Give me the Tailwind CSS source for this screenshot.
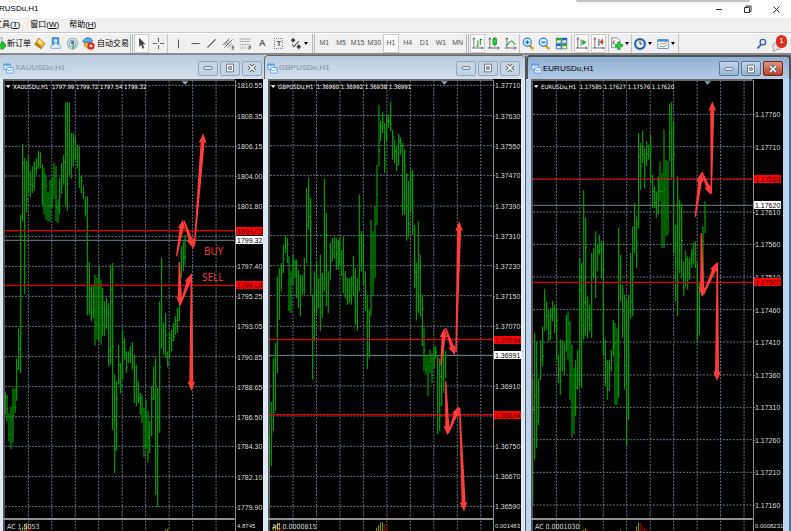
<!DOCTYPE html>
<html lang="zh-CN">

<head>
  <meta charset="UTF-8" />
  <meta name="viewport" content="width=device-width, initial-scale=1.0" />
  <title>EURUSDu,H1</title>
  <script src="https://cdn.jsdelivr.net/npm/@tailwindcss/browser@4"></script>
</head>

<body class="h-screen overflow-hidden flex flex-col bg-[#f0f0f0] text-black font-['Liberation_Sans','Noto_Sans_CJK_SC',sans-serif]">
  <!-- Title bar -->
  <header class="relative flex h-[18px] shrink-0 items-center justify-between bg-white">
    <h1 class="text-[8px] leading-[18px] -ml-px">RUSDu,H1</h1>
    <div class="absolute right-[41px] top-0 h-[2px] w-[174px] rounded-b bg-[#c4c4c4] shadow"></div>
    <div class="flex">
      <button aria-label="Minimize" class="flex w-[28px] items-center justify-center">
        <svg class="size-[9px]" viewBox="0 0 9 9"><path d="M1 4.5h6" stroke="#333" /></svg>
      </button>
      <button aria-label="Restore" class="flex w-[28px] items-center justify-center">
        <svg class="size-[9px]" viewBox="0 0 9 9" fill="none" stroke="#333"><path d="M1.500 2.500h5v5h-5zM3 2.500V1h5v5.500H6.500" /></svg>
      </button>
      <button aria-label="Close" class="flex w-[30px] items-center justify-center">
        <svg class="size-[9px]" viewBox="0 0 9 9"><path d="M1.500 1.500l6 6M7.500 1.500l-6 6" stroke="#333" /></svg>
      </button>
    </div>
  </header>

  <!-- Menu -->
  <nav class="flex h-[15px] shrink-0 gap-[10px] border-b border-[#c9c9c9] text-[8px] leading-[14px]">
    <button class="-ml-[6px]">工具(<u>T</u>)</button>
    <button>窗口(<u>W</u>)</button>
    <button>帮助(<u>H</u>)</button>
  </nav>

  <!-- Toolbar -->
  <div class="flex h-[22px] shrink-0 items-center border-b-2 border-[#8a8a8a] border-t border-t-white text-[8px] text-[#555]">
    <button class="flex w-[31px] items-center gap-px text-black">
      <svg class="h-[13px] w-[6px]" viewBox="5 0 6 13"><path d="M3 1h4v11H3z" fill="#eee" stroke="#999" /><path d="M4 7h2V5h3v2h2v3H9v2H6v-2H4z" fill="#19c22b" stroke="#0a8a18" stroke-width=".5" /></svg>
      <span class="whitespace-nowrap">新订单</span>
    </button>
    <div class="grid w-[66px] shrink-0 grid-cols-4 justify-items-center">
      <button aria-label="MetaEditor"><svg class="size-[13px]" viewBox="0 0 16 16"><path d="M2 9L7 1.500 14.500 8 10 14.500z" fill="#f2c23c" stroke="#a97010" /><path d="M2 9l8 5.500v-3L4 6.500z" fill="#b9780f" /><path d="M6 5l2-2 4 4-2 2z" fill="#ffe79a" /></svg></button>
      <button aria-label="Market"><svg class="size-[13px]" viewBox="0 0 16 16"><path d="M4 1h8v8H4z" fill="#4ba0ea" stroke="#1f6cb8" /><path d="M6 3h4v4H6z" fill="#c4e3ff" /><path d="M2 14c-1-3 1-5 3-4 1-3 6-3 6 0 3-1 5 2 3 4z" fill="#e3eefa" stroke="#7a9cc6" /></svg></button>
      <button aria-label="Signals"><svg class="size-[13px]" viewBox="0 0 16 16" fill="none"><circle cx="8" cy="8" r="6.500" stroke="#a6bccb" stroke-width="1.500" /><circle cx="8" cy="8" r="4" stroke="#8fabba" stroke-width="1.500" /><circle cx="8" cy="7" r="2" fill="#3a7492" /><path d="M8 8l2 1v6H8z" fill="#3eb34c" /></svg></button>
      <button aria-label="Experts"><svg class="size-[13px]" viewBox="0 0 16 16"><path d="M3 7l9 0-1 5-4 2-4-3z" fill="#f0c13b" stroke="#b07f16" /><path d="M1 6c0-2 3-5 6-5s6 2 6 4c-3 2-9 2-12 1z" fill="#5ba9e6" stroke="#2870b0" /><circle cx="11" cy="11" r="4.500" fill="#e02a1c" /><path d="M9.500 9.500h3v3h-3z" fill="#fff" /></svg></button>
    </div>
    <button class="w-[33px] shrink-0 whitespace-nowrap text-left text-black">自动交易</button>
    <span class="h-[19px] w-[3px] shrink-0 border-x border-[#b8b8b8]"></span>
    <div class="grid h-full w-[34px] shrink-0 grid-cols-2 place-items-center">
      <button aria-label="Cursor" class="flex h-full w-[15px] items-center justify-center border border-[#ccc] bg-[#fafafa]"><svg class="size-[13px]" viewBox="0 0 16 16"><path d="M5 1v11l2.500-2.500 2 5 2-1-2-4.500H13z" fill="#444" /></svg></button>
      <button aria-label="Crosshair"><svg class="size-[13px]" viewBox="0 0 16 16"><path d="M8 1v5M8 10v5M1 8h5M10 8h5" stroke="#666" stroke-width="1.300" /></svg></button>
    </div>
    <span class="h-[19px] w-px shrink-0 bg-[#c4c4c4]"></span>
    <div class="grid w-[134px] shrink-0 grid-cols-8 items-center justify-items-center ml-[2px]">
      <button aria-label="Vertical line"><svg class="size-[13px]" viewBox="0 0 16 16"><path d="M8 3v11" stroke="#555" stroke-width="1.300" /></svg></button>
      <button aria-label="Horizontal line"><svg class="size-[13px]" viewBox="0 0 16 16"><path d="M3 8h10" stroke="#555" stroke-width="1.300" /></svg></button>
      <button aria-label="Trendline"><svg class="size-[13px]" viewBox="0 0 16 16"><path d="M3 13L13 3" stroke="#555" stroke-width="1.300" /></svg></button>
      <button aria-label="Channel"><svg class="size-[13px]" viewBox="0 0 16 16" fill="none" stroke="#555"><path d="M1 10l8-8M3 13L13 3M7 13l5-5M3 8l3 3M5 6l3 3M7 4l3 3" /><path d="M15 11h-2.500v4H15M12.500 13H15" /></svg></button>
      <button aria-label="Fibonacci"><svg class="size-[13px]" viewBox="0 0 16 16" fill="none" stroke="#777"><path d="M1 2.500h13M1 5.500h13M1 9.500h13M1 13.500h8" stroke-dasharray="2 1" /><path d="M12.500 15.500v-4H15M12.500 13.500H15" stroke="#444" /></svg></button>
      <button class="text-[9px] leading-[13px] font-bold">A</button>
      <button class="h-[11px] w-[9px] border border-dotted border-[#888] text-[8px] leading-[9px] font-bold">T</button>
      <button aria-label="Arrows"><svg class="size-[13px]" viewBox="0 0 16 16" fill="#444"><path d="M5 1l3 3-3 3-3-3zM12 9l3 3-3 3-3-3z" /><path d="M4 9l2 3 6-7" fill="none" stroke="#444" stroke-width="1.300" /></svg></button>
    </div>
    <span class="mr-[3px] shrink-0 border-x-2 border-t-3 border-x-transparent border-t-black"></span>
    <span class="mx-px h-[19px] w-[3px] shrink-0 border-x border-[#b8b8b8]"></span>
    <div class="grid h-full w-[150px] shrink-0 grid-cols-9 text-[7px]">
      <button>M1</button><button>M5</button><button>M15</button><button>M30</button>
      <button class="border border-[#ccc] bg-[#fafafa]">H1</button>
      <button>H4</button><button>D1</button><button>W1</button><button>MN</button>
    </div>
    <span class="h-[19px] w-[3px] shrink-0 border-x border-[#b8b8b8]"></span>
    <div class="grid h-full w-[50px] shrink-0 grid-cols-3 place-items-center">
      <button aria-label="Bar chart" class="flex h-full w-[15px] items-center justify-center border border-[#ccc] bg-[#fafafa]"><svg class="size-[13px]" viewBox="0 0 16 16" fill="none"><path d="M3.500 1v13M1 13.500h14M2 3l1.500-2L5 3M13 12l2 1.500-2 1.500" stroke="#555" /><path d="M8.500 4v8M6.500 11h2M11.500 2v8M11.500 3h2" stroke="#19a02a" stroke-width="1.300" /></svg></button>
      <button aria-label="Candlesticks"><svg class="size-[13px]" viewBox="0 0 16 16" fill="none"><path d="M3.500 1v13M1 13.500h14M2 3l1.500-2L5 3M13 12l2 1.500-2 1.500" stroke="#555" /><path d="M9.500 0v12" stroke="#0d7a1a" /><path d="M7.500 2h4v7h-4z" fill="#2ddb3e" stroke="#0d7a1a" /></svg></button>
      <button aria-label="Line chart"><svg class="size-[13px]" viewBox="0 0 16 16" fill="none"><path d="M3.500 1v13M1 13.500h14M2 3l1.500-2L5 3M13 12l2 1.500-2 1.500" stroke="#555" /><path d="M3 11c2-2 4-6 6-6s3 3 5 4" stroke="#19a02a" stroke-width="1.300" /></svg></button>
    </div>
    <span class="h-[19px] w-px shrink-0 bg-[#c4c4c4]"></span>
    <div class="grid w-[50px] shrink-0 grid-cols-3 justify-items-center">
      <button aria-label="Zoom in"><svg class="size-[13px]" viewBox="0 0 16 16"><path d="M9 10l5 5" stroke="#d6a11d" stroke-width="3" /><circle cx="6.500" cy="6.500" r="5" fill="#d6ecff" stroke="#3d85cd" stroke-width="1.500" /><path d="M4 6.500h5M6.500 4v5" stroke="#1f68b5" stroke-width="1.500" /></svg></button>
      <button aria-label="Zoom out"><svg class="size-[13px]" viewBox="0 0 16 16"><path d="M9 10l5 5" stroke="#d6a11d" stroke-width="3" /><circle cx="6.500" cy="6.500" r="5" fill="#d6ecff" stroke="#3d85cd" stroke-width="1.500" /><path d="M4 6.500h5" stroke="#1f68b5" stroke-width="1.500" /></svg></button>
      <button aria-label="Tile windows"><svg class="size-[13px]" viewBox="0 0 16 16"><path d="M1 1h7v7H1zM8 8h7v7H8z" fill="#3f9e2d" /><path d="M8 1h7v7H8zM1 8h7v7H1z" fill="#2a5fbc" /><path d="M2 4h5v3H2zM9 4h5v3H9zM2 11h5v3H2zM9 11h5v3H9z" fill="#e4efe8" /></svg></button>
    </div>
    <span class="ml-px h-[19px] w-px shrink-0 bg-[#c4c4c4]"></span>
    <div class="grid h-full w-[34px] shrink-0 grid-cols-2 place-items-center ml-px">
      <button aria-label="Auto scroll" class="flex h-full w-[15px] items-center justify-center border border-[#ccc] bg-[#fafafa]"><svg class="size-[13px]" viewBox="0 0 16 16" fill="none"><path d="M3.500 1v13M1 13.500h14M2 3l1.500-2L5 3M13 12l2 1.500-2 1.500M7.500 3v8" stroke="#555" /><path d="M9 3l5 3.500L9 10z" fill="#19a02a" /></svg></button>
      <button aria-label="Chart shift" class="flex h-full w-[15px] items-center justify-center border border-[#ccc] bg-[#fafafa]"><svg class="size-[13px]" viewBox="0 0 16 16" fill="none"><path d="M3.500 1v13M1 13.500h14M2 3l1.500-2L5 3M13 12l2 1.500-2 1.500" stroke="#555" /><path d="M8.500 2v9" stroke="#3b6ea8" stroke-width="1.500" /><path d="M15 6h-3M13 3L9.500 6 13 9z" fill="#d8491f" stroke="#d8491f" /></svg></button>
    </div>
    <span class="mx-px h-[19px] w-px shrink-0 bg-[#c4c4c4]"></span>
    <button aria-label="Indicators" class="flex w-[19px] shrink-0 items-center justify-between">
      <svg class="size-[13px]" viewBox="0 0 16 16"><path d="M2 1h7l3 3v9H2z" fill="#f3f3f3" stroke="#888" /><path d="M4 10V6c0-2 2-2 2-1M3 7h3" fill="none" stroke="#666" /><path d="M6.500 9h3V6h3v3h3v3h-3v3.500h-3V12h-3z" fill="#1fd333" stroke="#0c8c1c" stroke-width=".7" /></svg>
      <span class="border-x-2 border-t-3 border-x-transparent border-t-black"></span>
    </button>
    <span class="mx-[2px] h-[19px] w-px shrink-0 bg-[#c4c4c4]"></span>
    <button aria-label="Periods" class="flex w-[18px] shrink-0 items-center justify-between">
      <svg class="size-[12px]" viewBox="0 0 16 16"><circle cx="8" cy="8" r="6.500" fill="#eef6ff" stroke="#1f66b4" stroke-width="3" /><path d="M8 4v4h3" fill="none" stroke="#333" stroke-width="1.300" /></svg>
      <span class="border-x-2 border-t-3 border-x-transparent border-t-black"></span>
    </button>
    <button aria-label="Templates" class="ml-[5px] flex w-[18px] shrink-0 items-center justify-between">
      <svg class="size-[12px]" viewBox="0 0 16 16"><path d="M1 2h14v12H1z" fill="#fff" stroke="#4d7fb9" /><path d="M1 2h14v3H1z" fill="#4d90d8" /><path d="M3 9l3-2 3 1 4-2" fill="none" stroke="#c8502a" /><path d="M3 12l3-1 3 1 4-3" fill="none" stroke="#2c9140" /></svg>
      <span class="border-x-2 border-t-3 border-x-transparent border-t-black"></span>
    </button>
    <span class="ml-[3px] h-[19px] w-px shrink-0 bg-[#c4c4c4]"></span>
    <button aria-label="Search" class="ml-auto mr-[5px]"><svg class="size-[11px]" viewBox="0 0 16 16" fill="none"><path d="M8 9l-6 6" stroke="#3c5fb4" stroke-width="2.500" /><circle cx="10" cy="6" r="4" stroke="#3c5fb4" stroke-width="2" /></svg></button>
    <button aria-label="Notifications" class="relative mr-[4px] h-[16px] w-[15px]">
      <svg class="absolute bottom-0 left-0 size-[10px]" viewBox="0 0 12 12"><path d="M1 5c0-6 10-6 10 0 0 3-3 5-6 4l-3 3V8C1 7 1 6 1 5z" fill="#e4e4e4" stroke="#999" /></svg>
      <span class="absolute -top-px right-0 flex h-[13px] w-[11px] items-center justify-center rounded-full bg-[#dc2f1c] text-[8px] text-white">1</span>
    </button>
  </div>

  <!-- Chart windows -->
  <main class="grid min-h-0 flex-1 grid-cols-[264fr_262fr_265fr] bg-[#808080]">
    <section class="flex min-w-0 flex-col bg-[#dce8f4] pr-px pl-[3px]">
      <div class="-mr-px -ml-[3px] flex h-[24px] shrink-0 items-center bg-linear-to-b from-[#b9cadc] to-[#d3e0ed] pt-[2px] pr-[2px] pl-[3px]">
        <svg class="size-[11px]" viewBox="0 0 12 12"><path d="M1 1h7v6H1z" fill="#e7f2fe" stroke="#5fa0e6" /><path d="M1 1h7v2H1z" fill="#5fa0e6" /><path d="M4 5h7v6H4z" fill="#f6faff" stroke="#5fa0e6" /><path d="M5 7l2 2 2-2 1 1" fill="none" stroke="#5fa0e6" /></svg>
        <h2 class="ml-px flex-1 text-[8px] text-[#87919b]">XAUUSDu,H1</h2>
        <div class="flex gap-[2px]" data-buttons></div>
      </div>
      <div class="flex min-h-0 flex-1 bg-black" data-chart="xau"></div>
    </section>
    <section class="flex min-w-0 flex-col border-r border-[#555] bg-[#dce8f4] pr-[4px] pl-[4px]">
      <div class="-mr-[4px] -ml-[4px] flex h-[24px] shrink-0 items-center rounded-t border-t border-l border-[#666] bg-linear-to-b from-[#b9cadc] to-[#d3e0ed] pt-px pr-[5px] pl-[2px]">
        <svg class="size-[11px]" viewBox="0 0 12 12"><path d="M1 1h7v6H1z" fill="#e7f2fe" stroke="#5fa0e6" /><path d="M1 1h7v2H1z" fill="#5fa0e6" /><path d="M4 5h7v6H4z" fill="#f6faff" stroke="#5fa0e6" /><path d="M5 7l2 2 2-2 1 1" fill="none" stroke="#5fa0e6" /></svg>
        <h2 class="ml-px flex-1 text-[8px] text-[#87919b]">GBPUSDu,H1</h2>
        <div class="flex gap-[2px]" data-buttons></div>
      </div>
      <div class="flex min-h-0 flex-1 bg-black" data-chart="gbp"></div>
    </section>
    <section class="flex min-w-0 flex-col border-r-2 border-[#3d7f96] bg-[#bdd4ee] pr-[6px] pl-[5px]">
      <div class="-mr-[8px] -ml-[5px] flex h-[24px] shrink-0 items-center rounded-t border-2 border-b-0 border-[#4a525a] bg-linear-to-b from-[#93afd0] to-[#b3cbe6] pt-px pr-[6px] pl-[3px]">
        <svg class="size-[11px]" viewBox="0 0 12 12"><path d="M1 1h7v6H1z" fill="#e7f2fe" stroke="#5fa0e6" /><path d="M1 1h7v2H1z" fill="#5fa0e6" /><path d="M4 5h7v6H4z" fill="#f6faff" stroke="#5fa0e6" /><path d="M5 7l2 2 2-2 1 1" fill="none" stroke="#5fa0e6" /></svg>
        <h2 class="ml-px flex-1 text-[8px] text-black">EURUSDu,H1</h2>
        <div class="flex gap-[2px]" data-buttons="active"></div>
      </div>
      <div class="flex min-h-0 flex-1 bg-black" data-chart="eur"></div>
    </section>
  </main>

  <script>
    // All chart coordinates are stored in thirds of a pixel: bars are "x high low"
    const charts = {
      xau: {
        left: 9, axisWidth: 28, right: 704, gridX: 85, marker: 555,
        title: 'XAUUSDu,H1  1797.99 1799.72 1797.54 1799.32',
        labels: [[22, '1810.55'], [114, '1808.35'], [205, '1806.15'], [294, '1804.00'], [384, '1801.80'], [475, ''], [565, '1797.40'], [655, '1795.25'], [745, '1793.05'], [836, '1790.85'], [926, '1788.65'], [1016, '1786.50'], [1105, '1784.30'], [1196, '1782.10'], [1286, '1779.90']],
        levels: [[458, '1800.03'], [622, '1796.04']],
        price: [487, '1799.32'],
        ac: ['AC 1.5053', '4.8745'],
        hist: [[62, 6, 'y'], [68, 13, 'y'], [74, 20, 'y'], [80, 24, 'y'], [86, 20, 'r'], [92, 12, 'r'], [497, 4, 'y'], [503, 6, 'y']],
        arrows: [[530, 535, 549, 425], [552, 428, 581, 512], [583, 505, 610, 166], [538, 552, 540, 684], [541, 680, 574, 587], [574, 587, 574, 939]],
        notes: [[612, 531, 'BUY'], [607, 609, 'SELL']],
        bars: '15 941 1011,21 951 1031,27 1006 1091,33 986 1113,39 931 1094,45 931 1006,50 841 968,56 751 876,62 410 885,68 198 430,74 240 648,80 250 403,85 235 345,91 280 358,97 265 345,103 250 338,109 240 290,115 218 272,121 222 270,127 258 382,132 270 410,138 290 425,144 342 430,150 305 432,156 298 390,162 255 362,168 265 430,174 365 435,179 300 408,185 255 348,191 230 320,197 73 385,202 73 400,208 73 290,214 165 302,220 165 265,226 175 245,232 200 270,238 205 330,244 295 345,250 325 362,256 355 415,262 355 712,268 552 710,274 620 730,280 625 720,285 590 802,291 600 785,297 568 790,303 605 800,308 630 775,314 670 775,320 660 752,326 675 866,332 560 860,338 555 1056,344 890 1185,350 910 1118,356 800 920,362 855 945,368 755 905,374 780 845,379 820 885,385 820 855,391 805 855,397 793 875,403 830 975,409 860 985,415 910 975,421 945 1010,426 950 1035,432 990 1138,438 965 1110,444 1000 1153,449 1030 1125,455 925 1075,461 865 965,467 840 1250,473 930 1286,479 670 1065,485 540 812,491 735 830,497 705 840,503 820 868,509 762 840,515 755 820,521 735 790,526 715 770,532 690 765,538 640 730,544 505 600,550 490 580,555 470 560'
      },
      gbp: {
        left: 12, axisWidth: 28, right: 687, gridX: 87, marker: 541,
        title: 'GBPUSDu,H1  1.36960 1.36992 1.36938 1.36991',
        labels: [[22, '1.37710'], [113, '1.37630'], [203, '1.37550'], [292, '1.37470'], [384, '1.37390'], [473, '1.37310'], [563, '1.37230'], [653, '1.37150'], [745, '1.37070'], [833, ''], [924, '1.36910'], [1014, ''], [1105, '1.36750'], [1195, '1.36670'], [1285, '1.36590']],
        levels: [[785, '1.37034'], [1010, '1.36834']],
        price: [832, '1.36991'],
        ac: ['AC 0.0000815', '0.001483'],
        hist: [[28, 10, 'y'], [34, 18, 'y'], [40, 25, 'y'], [46, 24, 'y'], [52, 14, 'r'], [58, 6, 'r'], [338, 10, 'y'], [344, 18, 'y'], [350, 26, 'y'], [356, 26, 'y'], [362, 20, 'r'], [368, 8, 'r']],
        arrows: [[531, 862, 541, 750], [545, 750, 573, 832], [576, 822, 586, 430], [545, 910, 551, 1072], [553, 1065, 585, 984], [587, 990, 600, 1301]],
        notes: [],
        bars: '16 1071 1281,22 971 1164,28 841 1058,34 796 999,40 595 885,46 570 725,52 555 640,58 500 585,64 473 525,70 480 555,75 535 700,81 580 705,87 530 620,93 545 600,97 545 660,103 575 690,109 590 715,115 590 650,121 540 650,128 330 555,134 300 455,140 360 650,146 650 905,151 580 790,158 555 710,163 600 690,169 530 760,175 585 720,181 303 640,187 405 685,193 580 705,199 495 605,205 480 550,211 477 540,217 480 575,223 485 575,227 478 560,233 515 595,238 475 645,244 580 660,250 600 680,256 600 675,262 595 680,268 535 655,274 570 740,280 600 760,286 350 640,292 460 580,298 465 620,304 580 700,310 650 872,316 695 840,321 425 715,327 460 655,333 385 600,339 260 440,345 80 265,350 130 190,356 103 165,362 135 285,368 108 190,374 110 150,380 72 160,386 155 245,392 185 255,398 205 280,404 168 262,410 178 230,416 195 412,422 215 410,428 285 488,434 310 478,440 275 405,446 275 470,452 440 630,457 555 727,463 430 705,469 530 715,475 655 805,480 750 880,486 830 890,492 835 955,498 815 885,504 825 915,510 805 870,515 805 840,521 835 1068,527 840 1060,533 815 985,539 780 945,545 820 900'
      },
      eur: {
        left: 15, axisWidth: 30, right: 680, gridX: 91, marker: 545,
        title: 'EURUSDu,H1  1.17585 1.17627 1.17576 1.17620',
        labels: [[109, '1.17760'], [206, '1.17710'], [304, ''], [402, '1.17610'], [499, '1.17560'], [597, '1.17510'], [695, '1.17460'], [792, '1.17410'], [891, '1.17360'], [988, '1.17310'], [1085, '1.17260'], [1183, '1.17210'], [1281, '1.17160']],
        levels: [[303, '1.17660'], [613, '1.17502']],
        price: [382, '1.17620'],
        ac: ['AC 0.0001030', '0.0008231'],
        hist: [[173, 4, 'y'], [179, 8, 'y'], [185, 4, 'r'], [284, 4, 'y'], [332, 14, 'y'], [338, 25, 'y'], [344, 24, 'r'], [350, 16, 'r'], [356, 8, 'r'], [362, 4, 'r']],
        arrows: [[508, 416, 526, 283], [528, 283, 556, 352], [556, 345, 559, 70], [526, 465, 529, 656], [532, 650, 574, 552], [574, 555, 573, 909]],
        notes: [],
        bars: '20 901 1276,26 764 1144,32 791 1111,38 901 1041,44 786 906,50 746 864,56 632 760,62 670 755,68 695 790,74 690 785,80 668 730,86 680 765,92 690 845,97 830 915,103 785 950,109 785 880,115 795 890,121 710 820,126 700 845,132 730 965,138 800 1080,144 870 1068,149 845 1015,155 815 935,161 540 925,167 555 930,173 337 785,179 420 775,185 655 780,191 680 760,197 525 780,203 510 600,209 460 660,215 500 580,220 470 530,226 490 600,232 490 830,238 785 925,244 845 965,250 845 940,256 815 880,262 725 835,267 735 980,273 750 980,278 450 960,284 530 670,290 620 780,296 650 935,302 665 1104,308 650 1025,314 525 720,320 445 715,326 375 525,332 415 570,338 165 450,344 195 335,350 158 255,356 210 330,362 190 265,368 200 245,374 173 315,380 290 390,386 325 390,391 340 420,397 295 410,402 250 370,408 285 510,414 155 510,420 245 475,426 250 470,431 78 250,437 72 300,443 130 525,449 440 670,455 295 715,461 365 585,467 375 600,473 550 655,479 518 625,485 535 635,491 540 605,497 515 570,502 495 560,508 490 570,514 555 790,520 615 770,526 600 655,531 445 630,537 370 465'
      }
    };

    // Tapered arrow from (x1, y1) to its tip at (x2, y2)
    function arrow([x1, y1, x2, y2]) {
      const len = Math.hypot(x2 - x1, y2 - y1);
      const ux = (x2 - x1) / len, uy = (y2 - y1) / len;
      const at = (d, w) => `${x2 - ux * d - uy * w},${y2 - uy * d + ux * w}`;
      return `<polygon points="${[at(len, 2), at(26, 6), at(30, 12), at(0, 0), at(30, -12), at(26, -6), at(len, -2)].join(' ')}" fill="#ff3b3b" />`;
    }

    function plot(c) {
      let out = `<g transform="translate(${-c.left / 3} -1) scale(.33333)">`;
      for (let i = 0; i < 9; i++) {
        const x = c.gridX + i * 70.4;
        out += `<path d="M${x} 8V1400" stroke="#65758a" stroke-width="3" stroke-dasharray="6 4" />`;
      }
      for (const [y] of c.labels) {
        out += `<path d="M${c.left + 6} ${y}H${c.right}" stroke="#65758a" stroke-width="3" stroke-dasharray="6 4" />`;
      }
      out += `<path d="M${c.left} ${c.price[0]}H${c.right}" stroke="#6f7e90" stroke-width="3" />`;
      c.bars.split(',').forEach((bar, i) => {
        const [x, hi, lo] = bar.split(' ').map(Number);
        const tick = hi + (lo - hi) * (i % 3 + 1) / 4;
        out += `<path d="M${x} ${hi}V${lo}M${x} ${tick}h4" stroke="${i ? '#00a000' : '#32cd32'}" stroke-width="3.500" />`;
      });
      for (const [y] of c.levels) {
        out += `<path d="M${c.left} ${y}H${c.right}" stroke="#e00000" stroke-width="3.500" />`;
      }
      out += c.arrows.map(arrow).join('');
      out += `<path d="M${c.marker - 10} 10h20l-10 10z" fill="#8fa3b8" />`;
      for (const [x, h, col] of c.hist) {
        out += `<path d="M${x} 1359v${-h}" stroke="${col === 'y' ? '#9a9a00' : '#a00000'}" stroke-width="3" />`;
      }
      // frame and pane splitter
      out += `<path d="M${c.left} 6H${c.right}" stroke="#8a8a8a" stroke-width="4" />`;
      out += `<path d="M${c.left + 3} 5V1400" stroke="#666" stroke-width="5" />`;
      out += `<path d="M${c.left} 1323H${c.right}" stroke="#909090" stroke-width="6" />`;
      out += `<path d="M${c.left + 9} 22h13l-6.500 8z" fill="#fff" /></g>`;
      out += `<text x="10" y="10" fill="#fff" xml:space="preserve" class="text-[6px]">${c.title}</text>`;
      out += `<text x="4" y="450" fill="#ddd">${c.ac[0]}</text>`;
      for (const [x, y, text] of c.notes) {
        out += `<text x="${Math.round((x - c.left) / 3)}" y="${Math.round(y / 3 - 1)}" fill="#ff3b3b" class="text-[10px] font-['Open_Sans',sans-serif]">${text}</text>`;
      }
      return `<svg class="h-full min-w-0 flex-1 text-[7px] font-['DejaVu_Sans_Condensed',sans-serif]">${out}</svg>`;
    }

    function axis(c) {
      let out = '<path d="M.5 1V500" stroke="#8a8a8a" />';
      for (const [y, text] of c.labels) {
        const py = Math.round(y / 3 - 1);
        if (text) out += `<path d="M0 ${py + .5}h2" stroke="#8a8a8a" /><text x="2" y="${py + 3}" fill="#ddd">${text}</text>`;
      }
      for (const [y, text] of c.levels) {
        const py = Math.round(y / 3 - 1);
        out += `<rect x="1" y="${py - 4}" width="27" height="8" fill="#f00" /><text x="2" y="${py + 3}" fill="#400">${text}</text>`;
      }
      const py = Math.round(c.price[0] / 3 - 1);
      out += `<rect x="1" y="${py - 4}" width="27" height="8" fill="#fff" /><text x="2" y="${py + 3}" fill="#000">${c.price[1]}</text>`;
      out += `<text x="2" y="449" fill="#ddd" class="text-[6px]">${c.ac[1]}</text>`;
      return `<svg class="h-full shrink-0 text-[7px]" width="${c.axisWidth}">${out}</svg>`;
    }

    document.querySelectorAll('[data-chart]').forEach(el => {
      const c = charts[el.dataset.chart];
      el.innerHTML = plot(c) + axis(c);
    });

    const glyphs = [
      ['Minimize', '<rect x="2.500" y="5.500" width="9" height="3" rx="1" fill="#fff" stroke="#596273" />'],
      ['Maximize', '<path d="M3 2.500h8v9H3z" fill="#fff" stroke="#596273" /><path d="M5.500 5.500h3v3h-3z" fill="#cdd9e6" stroke="#596273" />'],
      ['Close', '<path d="M3.500 3.500l7 7M10.500 3.500l-7 7" stroke="#596273" stroke-width="4" /><path d="M3.500 3.500l7 7M10.500 3.500l-7 7" stroke="#fff" stroke-width="2" />']
    ];
    document.querySelectorAll('[data-buttons]').forEach(el => {
      const active = el.dataset.buttons === 'active';
      el.innerHTML = glyphs.map(([name, shape]) => {
        let look = 'border-[#95a5b8] bg-[#c6d5e5]';
        if (active) look = name === 'Close' ? 'border-[#6b2a22] bg-linear-to-b from-[#dd9283] to-[#bd3a22]' : 'border-[#62758d] bg-linear-to-b from-[#c3d5ea] to-[#98b3d2]';
        return `<button aria-label="${name}" class="flex h-[15px] w-[20px] items-center justify-center rounded-xs border ${look}"><svg class="size-[12px]" viewBox="0 0 14 14">${shape}</svg></button>`;
      }).join('');
    });
  </script>
</body>

</html>
